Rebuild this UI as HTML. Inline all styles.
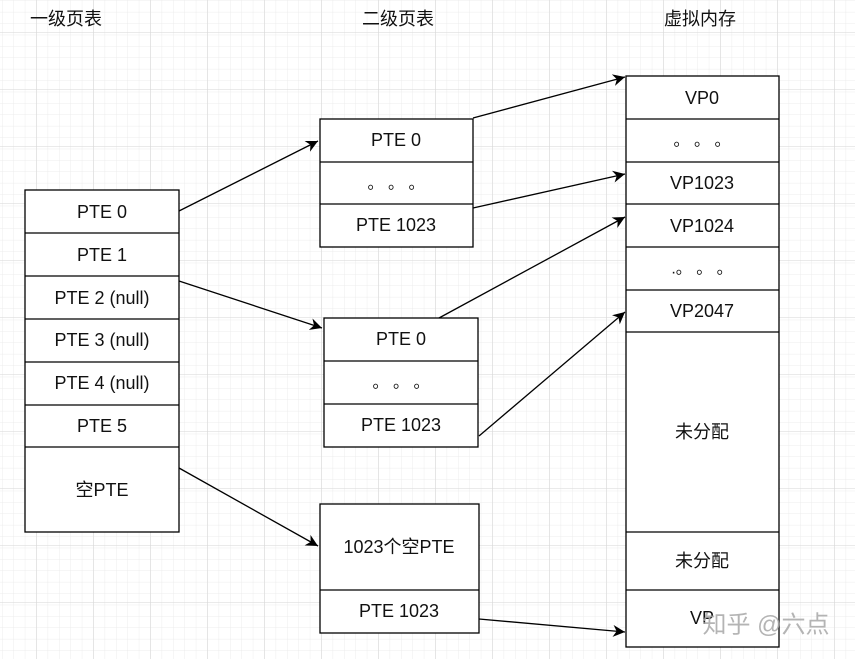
<!DOCTYPE html>
<html><head><meta charset="utf-8"><style>
html,body{margin:0;padding:0;background:#fff;}
svg{display:block;}
text{font-family:"Liberation Sans","Noto Sans CJK SC",sans-serif;font-size:18px;fill:#111;text-anchor:middle;dominant-baseline:central;}
.d{font-size:16px;}
</style></head><body>
<svg width="855" height="659" xmlns="http://www.w3.org/2000/svg">
<defs>
<pattern id="minor" x="2.5" y="1" width="11.4" height="11.4" patternUnits="userSpaceOnUse"><path d="M11.4 0V11.4M0 11.4H11.4" stroke="#ececec" stroke-width="1" fill="none"/></pattern>
<pattern id="major" x="-20" y="-24" width="57" height="57" patternUnits="userSpaceOnUse"><path d="M57 0V57M0 57H57" stroke="#d6d6d6" stroke-width="1" fill="none"/></pattern>
<marker id="ar" viewBox="0 0 10 10" refX="10" refY="5" markerWidth="12" markerHeight="12" markerUnits="userSpaceOnUse" orient="auto"><path d="M0 0L10 5L0 10L3 5Z" fill="#000"/></marker>
</defs>
<rect width="855" height="659" fill="#fff"/>
<rect width="855" height="659" fill="url(#minor)"/>
<rect width="855" height="659" fill="url(#major)"/>
<text x="66" y="19">一级页表</text>
<text x="398" y="19">二级页表</text>
<text x="700" y="19">虚拟内存</text>
<g fill="#fff" stroke="#000" stroke-width="1.3">
<rect x="25" y="190" width="154" height="342"/>
<rect x="320" y="119" width="153" height="128"/>
<rect x="324" y="318" width="154" height="129"/>
<rect x="320" y="504" width="159" height="129"/>
<rect x="626" y="76" width="153" height="571"/>
</g>
<g stroke="#000" stroke-width="1.3">
<path d="M25 233H179M25 276H179M25 319H179M25 362H179M25 405H179M25 447H179"/>
<path d="M320 162H473M320 204H473"/>
<path d="M324 361H478M324 404H478"/>
<path d="M320 590H479"/>
<path d="M626 119H779M626 162H779M626 204H779M626 247H779M626 290H779M626 332H779M626 532H779M626 590H779"/>
</g>
<g stroke="#000" stroke-width="1.3" fill="none" marker-end="url(#ar)">
<path d="M179 211L318 141"/>
<path d="M473 118L625 77"/>
<path d="M473 208L625 174"/>
<path d="M179 281L322 328"/>
<path d="M439 318L625 217"/>
<path d="M479 436L625 312"/>
<path d="M179 468L318 546"/>
<path d="M479 619L625 632"/>
</g>
<text x="102" y="212">PTE 0</text>
<text x="102" y="255">PTE 1</text>
<text x="102" y="298">PTE 2 (null)</text>
<text x="102" y="340">PTE 3 (null)</text>
<text x="102" y="383">PTE 4 (null)</text>
<text x="102" y="426">PTE 5</text>
<text x="102" y="490">空PTE</text>
<text x="396" y="140">PTE 0</text>
<text x="396" y="184" class="d">。 。 。</text>
<text x="396" y="225">PTE 1023</text>
<text x="401" y="339">PTE 0</text>
<text x="401" y="383" class="d">。 。 。</text>
<text x="401" y="425">PTE 1023</text>
<text x="399" y="547">1023个空PTE</text>
<text x="399" y="611">PTE 1023</text>
<text x="702" y="98">VP0</text>
<text x="702" y="141" class="d">。 。 。</text>
<text x="702" y="183">VP1023</text>
<text x="702" y="226">VP1024</text>
<text x="702" y="269" class="d">.。 。 。</text>
<text x="702" y="311">VP2047</text>
<text x="702" y="432">未分配</text>
<text x="702" y="561">未分配</text>
<text x="702" y="618">VP</text>
<text x="766" y="625" style="font-size:24px;fill:#a8a8a8;opacity:0.85">知乎 @六点</text>
</svg>
</body></html>
